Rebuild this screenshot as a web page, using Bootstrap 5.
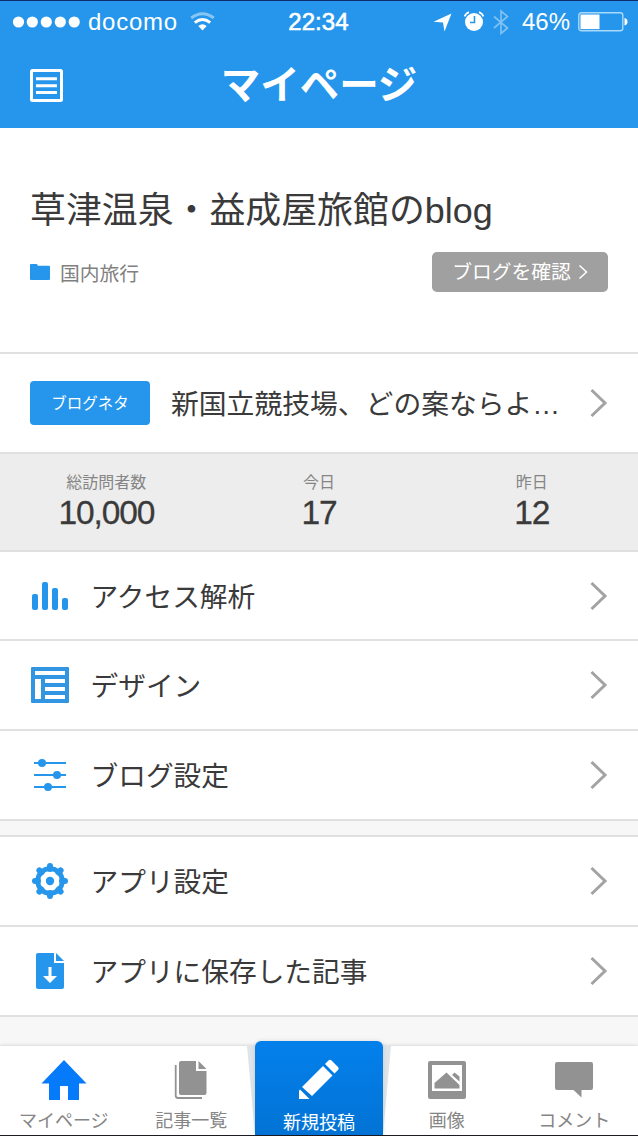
<!DOCTYPE html>
<html lang="ja">
<head>
<meta charset="utf-8">
<meta name="viewport" content="width=device-width, initial-scale=1">
<title>マイページ</title>
<link href="https://cdn.jsdelivr.net/npm/bootstrap@5.3.0/dist/css/bootstrap.min.css" rel="stylesheet">
<style>
  :root { --brand: #2596eb; --rule: #e0e0e0; }
  body { font-family: "Liberation Sans", "Noto Sans CJK JP", sans-serif; color: #3a3a3a; height: 1136px; overflow: hidden; background: #f7f7f7; }
  svg { display: block; flex: none; }
  .app { height: 1136px; border-top: 1px solid #10296b; border-bottom: 1px solid #1c1c22; }
  .topbar { background: var(--brand); height: 127px; }
  .status { height: 42px; font-size: 24px; line-height: 42px; padding: 0 10px 0 12px; }
  .status > * { flex: 1 1 0; }
  .carrier { letter-spacing: .75px; margin-left: 7px; margin-right: 12px; }
  .clock { -webkit-text-stroke: .6px #fff; letter-spacing: .1px; padding-right: 3px; }
  .titlebar { height: 85px; padding: 0 30px; display: grid; grid-template-columns: 34px 1fr 34px; align-items: center; }
  .titlebar h1 { font-size: 39.5px; line-height: 84px; margin: -2px 0 0; font-weight: 700; }
  .titlebar svg { margin-top: -1px; }
  .profile { height: 226px; padding: 58px 30px 0; border-bottom: 2px solid var(--rule); }
  .profile h2 { font-size: 35.9px; line-height: 50px; margin: 0; font-weight: 400; }
  .category { font-size: 19.8px; line-height: 40px; color: #808080; gap: 10px; }
  .category span { padding-top: 3px; }
  .category { height: 40px; }
  .btn-check-blog { width: 176px; height: 40px; padding: 0; border: 0; border-radius: 5px; background: #a0a0a0; color: #fff; font-size: 19.8px; line-height: 38px; gap: 7px; }
  .meta { margin-top: 16px; }
  .topic { height: 100px; padding: 0 30px; border-bottom: 2px solid var(--rule); font-size: 27.8px; gap: 21px; }
  .topic-tag { width: 120px; height: 44px; border-radius: 4px; background: var(--brand); font-size: 15.5px; line-height: 46px; }
  .topic-text { line-height: 94px; padding-top: 4px; }
  .stats { height: 98px; background: #ededed; border-bottom: 2px solid var(--rule); padding-top: 18px; }
  .stats .label { font-size: 16px; line-height: 22px; color: #858585; }
  .stats .num { font-size: 33.5px; line-height: 37px; letter-spacing: -1.1px; -webkit-text-stroke: .3px #3a3a3a; }
  .menu-item { height: 90px; padding: 0 30px; border-bottom: 2px solid var(--rule); background: #fff; font-size: 27.7px; line-height: 84px; gap: 20.5px; }
  .menu-item span { padding-top: 3px; }
  .menu-item.short { height: 89px; line-height: 83px; }
  .menu-gap { height: 16px; border-bottom: 2px solid var(--rule); }
  .tabs { height: 89px; background: #fff; box-shadow: 0 -1px 3px rgba(0,0,0,.12); font-size: 18px; color: #858585; }
  .tab { flex: 1 1 0; padding-top: 12px; line-height: 24px; }
  .tab svg { height: 44px; margin-bottom: 7px; }
  .tab-post { position: relative; padding: 0; }
  .tab-post svg.flare { position: absolute; left: -8px; top: 0; height: 89px; }
  .post-btn { position: relative; margin-top: -5px; height: 94px; width: 128px; background: linear-gradient(#0480eb, #0273d5); border-radius: 6px 6px 0 0; padding-top: 17px; color: #fff; box-shadow: 0 0 4px rgba(0,0,0,.12); }
  .post-btn svg { margin-bottom: 9px; }
</style>
</head>
<body>
<div class="app d-flex flex-column">
  <header class="topbar text-white">
    <div class="status d-flex align-items-center">
      <div class="d-flex align-items-center">
        <svg width="69" height="12" fill="#fff"><circle cx="6.5" cy="6" r="5.6"/><circle cx="20.3" cy="6" r="5.6"/><circle cx="34.3" cy="6" r="5.6"/><circle cx="48.3" cy="6" r="5.6"/><circle cx="62.2" cy="6" r="5.6"/></svg>
        <span class="carrier">docomo</span>
        <svg width="25" height="20" viewBox="0 0 25 20" fill="none" stroke="#fff" stroke-width="3"><path d="M1.2 6Q12.500-2.500 23.800 6" opacity=".45"/><path d="M4.800 10.600Q12.500 4.500 20.200 10.600"/><path d="M8.300 14Q12.500 10.500 16.700 14L12.500 18.500Z" fill="#fff" stroke="none"/></svg>
      </div>
      <div class="clock text-center">22:34</div>
      <div class="d-flex align-items-center justify-content-end">
        <svg width="19" height="19" viewBox="0 0 19 19"><path d="M18.500.5L11.500 18.500 10 9.500 .5 8.700Z" fill="#fff"/></svg>
        <svg class="ms-2 ps-1" width="24" height="22" viewBox="0 0 20 22"><circle cx="10" cy="11" r="9" fill="#fff"/><path d="M.6 5.500Q1.500 2.500 5 1.200M19.400 5.500Q18.500 2.500 15 1.200" fill="none" stroke="#fff" stroke-width="1.800"/><path d="M10.500 5V11.500H6" fill="none" stroke="#2596eb" stroke-width="1.600"/></svg>
        <svg class="ms-2 me-2" width="18" height="26" viewBox="0 0 18 26" fill="none" stroke="#7fc1f3" stroke-width="1.700"><path d="M2 7.500L15.500 19 9 24.500V2L15.500 7.500 2 19"/></svg>
        <span class="ps-1">46%</span>
        <svg class="ms-2" width="50" height="20" viewBox="0 0 50 20"><rect x=".8" y=".8" width="44" height="18" rx="2.500" fill="none" stroke="#a9dafa" stroke-width="1.400"/><rect x="2.500" y="2.500" width="19" height="14.600" fill="#fff"/><path d="M46.500 6Q49.500 6.500 49.500 9.800T46.500 13.500Z" fill="#fff"/></svg>
      </div>
    </div>
    <div class="titlebar">
      <svg width="33" height="33" viewBox="0 0 33 33" fill="none" stroke="#fff" stroke-width="3"><rect x="1.500" y="1.500" width="30" height="30" rx="1"/><path d="M6 9.700H27M6 16.700H27M6 23.500H27"/></svg>
      <h1 class="text-center">マイページ</h1>
    </div>
  </header>

  <section class="profile bg-white">
    <h2 class="text-nowrap">草津温泉・益成屋旅館のblog</h2>
    <div class="meta d-flex justify-content-between">
      <div class="category d-flex align-items-center">
        <svg width="20" height="16" viewBox="0 0 20 16"><path d="M0 1Q0 0 1 0H6.500Q7.500 0 7.800 1.800H19Q20 1.800 20 2.800V15Q20 16 19 16H1Q0 16 0 15Z" fill="#2596eb"/></svg>
        <span>国内旅行</span>
      </div>
      <button class="btn btn-check-blog d-flex align-items-center justify-content-center" type="button">ブログを確認
        <svg width="10" height="16" viewBox="0 0 10 16" fill="none" stroke="#fff" stroke-width="1.500"><path d="M1.500 1.500L8.500 8 1.500 14.500"/></svg>
      </button>
    </div>
  </section>

  <a class="topic d-flex align-items-center bg-white text-reset text-decoration-none" href="#">
    <span class="topic-tag text-white text-center flex-shrink-0">ブログネタ</span>
    <span class="topic-text text-nowrap flex-grow-1">新国立競技場、どの案ならよ…</span>
    <svg width="18" height="30" viewBox="0 0 18 30" fill="none" stroke="#a3a3a3" stroke-width="3"><path d="M1.500 2L15 15 1.500 28"/></svg>
  </a>

  <section class="stats row g-0 text-center">
    <div class="col"><div class="label">総訪問者数</div><div class="num">10,000</div></div>
    <div class="col"><div class="label">今日</div><div class="num">17</div></div>
    <div class="col"><div class="label">昨日</div><div class="num">12</div></div>
  </section>

  <nav>
    <a class="menu-item short d-flex align-items-center text-reset text-decoration-none" href="#">
      <svg width="40" height="40" viewBox="0 0 40 40" fill="#2596eb"><rect x="2" y="18" width="6" height="16" rx="2"/><rect x="12" y="6" width="6" height="28" rx="2"/><rect x="22" y="12" width="6" height="22" rx="2"/><rect x="32" y="22" width="6" height="12" rx="2"/></svg>
      <span class="flex-grow-1">アクセス解析</span>
      <svg width="18" height="30" viewBox="0 0 18 30" fill="none" stroke="#a3a3a3" stroke-width="3"><path d="M1.500 2L15 15 1.500 28"/></svg>
    </a>
    <a class="menu-item d-flex align-items-center text-reset text-decoration-none" href="#">
      <svg width="40" height="40" viewBox="0 0 40 40"><rect x="1" y="2" width="38" height="36" rx="1" fill="#3295e2"/><path d="M5 6H35V10H5ZM5 14H11V34H5ZM15 14H35V18H15ZM15 22H35V26H15ZM15 30H35V34H15Z" fill="#fff"/></svg>
      <span class="flex-grow-1">デザイン</span>
      <svg width="18" height="30" viewBox="0 0 18 30" fill="none" stroke="#a3a3a3" stroke-width="3"><path d="M1.500 2L15 15 1.500 28"/></svg>
    </a>
    <a class="menu-item d-flex align-items-center text-reset text-decoration-none" href="#">
      <svg width="40" height="40" viewBox="0 0 40 40" fill="#2596eb"><path d="M4 8H36M4 20H36M4 32H36" stroke="#2596eb" stroke-width="2"/><circle cx="12" cy="8" r="4"/><circle cx="27" cy="20" r="4"/><circle cx="18" cy="32" r="4"/></svg>
      <span class="flex-grow-1">ブログ設定</span>
      <svg width="18" height="30" viewBox="0 0 18 30" fill="none" stroke="#a3a3a3" stroke-width="3"><path d="M1.500 2L15 15 1.500 28"/></svg>
    </a>
    <div class="menu-gap"></div>
    <a class="menu-item d-flex align-items-center text-reset text-decoration-none" href="#">
      <svg width="40" height="40" viewBox="0 0 40 40" fill="none" stroke="#2596eb"><circle cx="20" cy="20" r="12.300" stroke-width="4.800"/><circle cx="20" cy="20" r="4.200" fill="#2596eb" stroke="none"/><path d="M20 5V8M20 32V35M5 20H8M32 20H35M9.400 9.400L11.500 11.500M28.500 28.500L30.600 30.600M9.400 30.600L11.500 28.500M28.500 11.500L30.600 9.400" stroke-width="6" stroke-linecap="round"/></svg>
      <span class="flex-grow-1">アプリ設定</span>
      <svg width="18" height="30" viewBox="0 0 18 30" fill="none" stroke="#a3a3a3" stroke-width="3"><path d="M1.500 2L15 15 1.500 28"/></svg>
    </a>
    <a class="menu-item d-flex align-items-center text-reset text-decoration-none" href="#">
      <svg width="40" height="40" viewBox="0 0 40 40"><path d="M8 2H24V12H34V36Q34 38 32 38H8Q6 38 6 36V4Q6 2 8 2ZM26 2L34 10H26Z" fill="#2596eb"/><path d="M18.500 16H21.500V25H27L20 32 13 25H18.500Z" fill="#fff"/></svg>
      <span class="flex-grow-1">アプリに保存した記事</span>
      <svg width="18" height="30" viewBox="0 0 18 30" fill="none" stroke="#a3a3a3" stroke-width="3"><path d="M1.500 2L15 15 1.500 28"/></svg>
    </a>
  </nav>

  <footer class="mt-auto">
    <div class="tabs d-flex text-center">
      <div class="tab d-flex flex-column align-items-center">
        <svg width="46" height="44" viewBox="0 0 46 44"><path d="M23 2L45.500 25.500H38V42H27V28H19V42H8V25.500H.5Z" fill="#057bfb"/></svg>
        <span>マイページ</span>
      </div>
      <div class="tab d-flex flex-column align-items-center">
        <svg width="34" height="44" viewBox="0 0 34 44"><path d="M7 3H22V13H32.500V35Q32.500 37 30.500 37H7Q5 37 5 35V5Q5 3 7 3ZM24.500 3L32.500 11H24.500Z" fill="#929292"/><path d="M1.700 7V37.500Q1.700 40 4.200 40H28" fill="none" stroke="#929292" stroke-width="1.800"/></svg>
        <span>記事一覧</span>
      </div>
      <div class="tab tab-post">
        <svg class="flare" width="144" height="89" viewBox="0 0 144 89"><path d="M0 0H144L136 89H8Z" fill="#dfe4e8"/></svg>
        <div class="post-btn d-flex flex-column align-items-center">
          <svg width="42" height="44" viewBox="0 0 42 44" fill="#fff"><path d="M4 29L25 8 34.500 17.500 14 38Z"/><path d="M27 6L30.500 2.500Q32 1 33.500 2.500L40 9Q41.500 10.500 40 12L36.500 15.500Z"/><path d="M2 31.500L11.500 41H1V32.500Z"/></svg>
          <span>新規投稿</span>
        </div>
      </div>
      <div class="tab d-flex flex-column align-items-center">
        <svg width="38" height="44" viewBox="0 0 38 44"><rect y="3" width="38" height="38" rx="2" fill="#929292"/><path d="M4 7H34V33H4Z" fill="#fff"/><path d="M6.500 30.500V25L18.500 14.500 31.500 27V30.500ZM24 17L26.500 14.500 31.500 18.500V23.500Z" fill="#929292"/></svg>
        <span>画像</span>
      </div>
      <div class="tab d-flex flex-column align-items-center">
        <svg width="38" height="44" viewBox="0 0 38 44"><path d="M2 4H36Q38 4 38 6V30Q38 32 36 32H26.500V39.500L18.500 32H2Q0 32 0 30V6Q0 4 2 4Z" fill="#929292"/></svg>
        <span>コメント</span>
      </div>
    </div>
  </footer>
</div>
<script src="https://cdn.jsdelivr.net/npm/bootstrap@5.3.0/dist/js/bootstrap.bundle.min.js"></script>
</body>
</html>
